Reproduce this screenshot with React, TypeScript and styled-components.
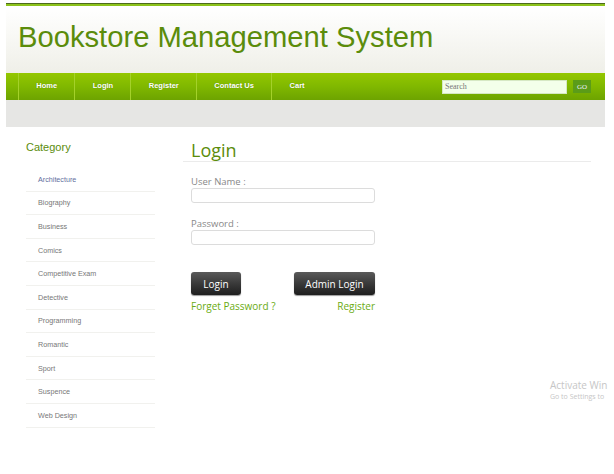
import React from "react";
import styled, { createGlobalStyle } from "styled-components";

const Global = createGlobalStyle`
  html, body { margin: 0; padding: 0; background: #fff; }
  body { font-family: "Liberation Sans", Arial, sans-serif; overflow: hidden; }
  * { box-sizing: border-box; }
`;

const Page = styled.div`
  position: relative;
  width: 614px;
  height: 474px;
  overflow: hidden;
  padding: 3px 9px 0 6px;
`;

const TopLine = styled.div`
  height: 3px;
  border-top: 1px solid #4d6b1e;
  background: #8cc21b;
`;

const Header = styled.header`
  height: 67px;
  background: linear-gradient(#ffffff 0%, #f9f9f6 40%, #efefe8 100%);
  display: flex;
  align-items: center;
  padding: 0 0 4px 12px;
`;

const Title = styled.h1`
  margin: 0;
  font-family: "Liberation Sans", Arial, sans-serif;
  font-weight: normal;
  font-size: 29.2px;
  color: #5b8c0b;
`;

const Nav = styled.nav`
  height: 27px;
  background: linear-gradient(#94c700 0%, #80b800 50%, #6da300 100%);
  display: flex;
  align-items: stretch;
  padding-left: 12px;
`;

const NavItem = styled.a`
  display: flex;
  align-items: center;
  padding: 0 17.3px 2px;
  border-left: 1px solid #a4d12a;
  font-size: 7.5px;
  font-weight: bold;
  color: #fff;
  text-shadow: 0 0 1px #5a8a00;
  text-decoration: none;
`;

const SearchBox = styled.form`
  margin-left: auto;
  display: flex;
  align-items: center;
  gap: 6px;
  padding-right: 14px;
`;

const SearchInput = styled.div`
  width: 125px;
  height: 14px;
  background: #f3ffea;
  border: 1px solid #d6e8c4;
  font-family: "Liberation Serif", "Times New Roman", serif;
  font-size: 8px;
  color: #777;
  padding: 1px 2px;
  display: flex;
  align-items: center;
`;

const GoButton = styled.div`
  width: 18px;
  height: 13px;
  background: #5b9c18;
  color: #eef;
  font-family: "Liberation Serif", "Times New Roman", serif;
  font-size: 7px;
  display: flex;
  align-items: center;
  justify-content: center;
`;

const Band = styled.div`
  height: 27px;
  background: #e6e6e4;
`;

const Body = styled.div`
  display: flex;
  padding: 14px 0 0 20px;
`;

const Sidebar = styled.aside`
  width: 129px;
  margin-right: 36px;
`;

const SideTitle = styled.h3`
  margin: 0 0 13px;
  font-family: "Liberation Sans", Arial, sans-serif;
  font-weight: normal;
  font-size: 11px;
  color: #5b8c0b;
  height: 14px;
`;

const CatList = styled.ul`
  list-style: none;
  margin: 0;
  padding: 0;
`;

const CatItem = styled.li<{ $visited?: boolean }>`
  height: 23.6px;
  border-bottom: 1px solid #f1f1ee;
  padding-left: 12px;
  display: flex;
  align-items: center;
  font-size: 7.2px;
  color: ${(p) => (p.$visited ? "#5f6f9e" : "#777")};
`;

const Main = styled.main`
  width: 400px;
`;

const Heading = styled.h2`
  margin: 0 0 0 -8px;
  padding: 0 0 0 8px;
  height: 21px;
  border-bottom: 1px solid #ebebeb;
  font-family: "Open Sans", sans-serif;
  font-weight: normal;
  font-size: 18px;
  line-height: 18px;
  color: #5b8c0b;
`;

const Form = styled.div`
  width: 184px;
  padding-top: 13px;
  display: flex;
  flex-direction: column;
`;

const Label = styled.div`
  font-family: "Open Sans", sans-serif;
  font-size: 9.5px;
  line-height: 13px;
  color: #888;
  height: 13px;
`;

const Field = styled.div`
  height: 15px;
  border: 1px solid #dcdcdc;
  border-radius: 3px;
  background: #fff;
  margin-bottom: 14px;
`;

const Buttons = styled.div`
  display: flex;
  justify-content: space-between;
  margin-top: 13px;
`;

const DarkButton = styled.div<{ $w: number }>`
  width: ${(p) => p.$w}px;
  height: 23px;
  border-radius: 3px;
  background: linear-gradient(#5a5a5a 0%, #3a3a3a 50%, #1e1e1e 100%);
  box-shadow: 0 1px 1px #999;
  color: #fff;
  font-family: "Open Sans", sans-serif;
  font-size: 10px;
  display: flex;
  align-items: center;
  justify-content: center;
`;

const Links = styled.div`
  display: flex;
  justify-content: space-between;
  margin-top: 4px;
`;

const GreenLink = styled.a`
  font-family: "Open Sans", sans-serif;
  font-size: 10px;
  line-height: 14px;
  color: #6aab12;
  text-decoration: none;
`;

const Watermark = styled.div`
  position: absolute;
  left: 550px;
  top: 378px;
  color: #c6c6c6;
  font-family: "Open Sans", sans-serif;
  white-space: nowrap;
`;

const WmBig = styled.div`
  font-size: 10px;
  line-height: 14px;
`;

const WmSmall = styled.div`
  font-size: 7px;
  line-height: 10px;
`;

const categories = [
  "Architecture",
  "Biography",
  "Business",
  "Comics",
  "Competitive Exam",
  "Detective",
  "Programming",
  "Romantic",
  "Sport",
  "Suspence",
  "Web Design",
];

export default function App() {
  return (
    <Page>
      <Global />
      <TopLine />
      <Header>
        <Title>Bookstore Management System</Title>
      </Header>
      <Nav>
        {["Home", "Login", "Register", "Contact Us", "Cart"].map((n) => (
          <NavItem key={n}>{n}</NavItem>
        ))}
        <SearchBox>
          <SearchInput>Search</SearchInput>
          <GoButton>GO</GoButton>
        </SearchBox>
      </Nav>
      <Band />
      <Body>
        <Sidebar>
          <SideTitle>Category</SideTitle>
          <CatList>
            {categories.map((c, i) => (
              <CatItem key={c} $visited={i === 0}>
                {c}
              </CatItem>
            ))}
          </CatList>
        </Sidebar>
        <Main>
          <Heading>Login</Heading>
          <Form>
            <Label>User Name :</Label>
            <Field />
            <Label>Password :</Label>
            <Field />
            <Buttons>
              <DarkButton $w={50}>Login</DarkButton>
              <DarkButton $w={81}>Admin Login</DarkButton>
            </Buttons>
            <Links>
              <GreenLink>Forget Password ?</GreenLink>
              <GreenLink>Register</GreenLink>
            </Links>
          </Form>
        </Main>
      </Body>
      <Watermark>
        <WmBig>Activate Win</WmBig>
        <WmSmall>Go to Settings to</WmSmall>
      </Watermark>
    </Page>
  );
}
